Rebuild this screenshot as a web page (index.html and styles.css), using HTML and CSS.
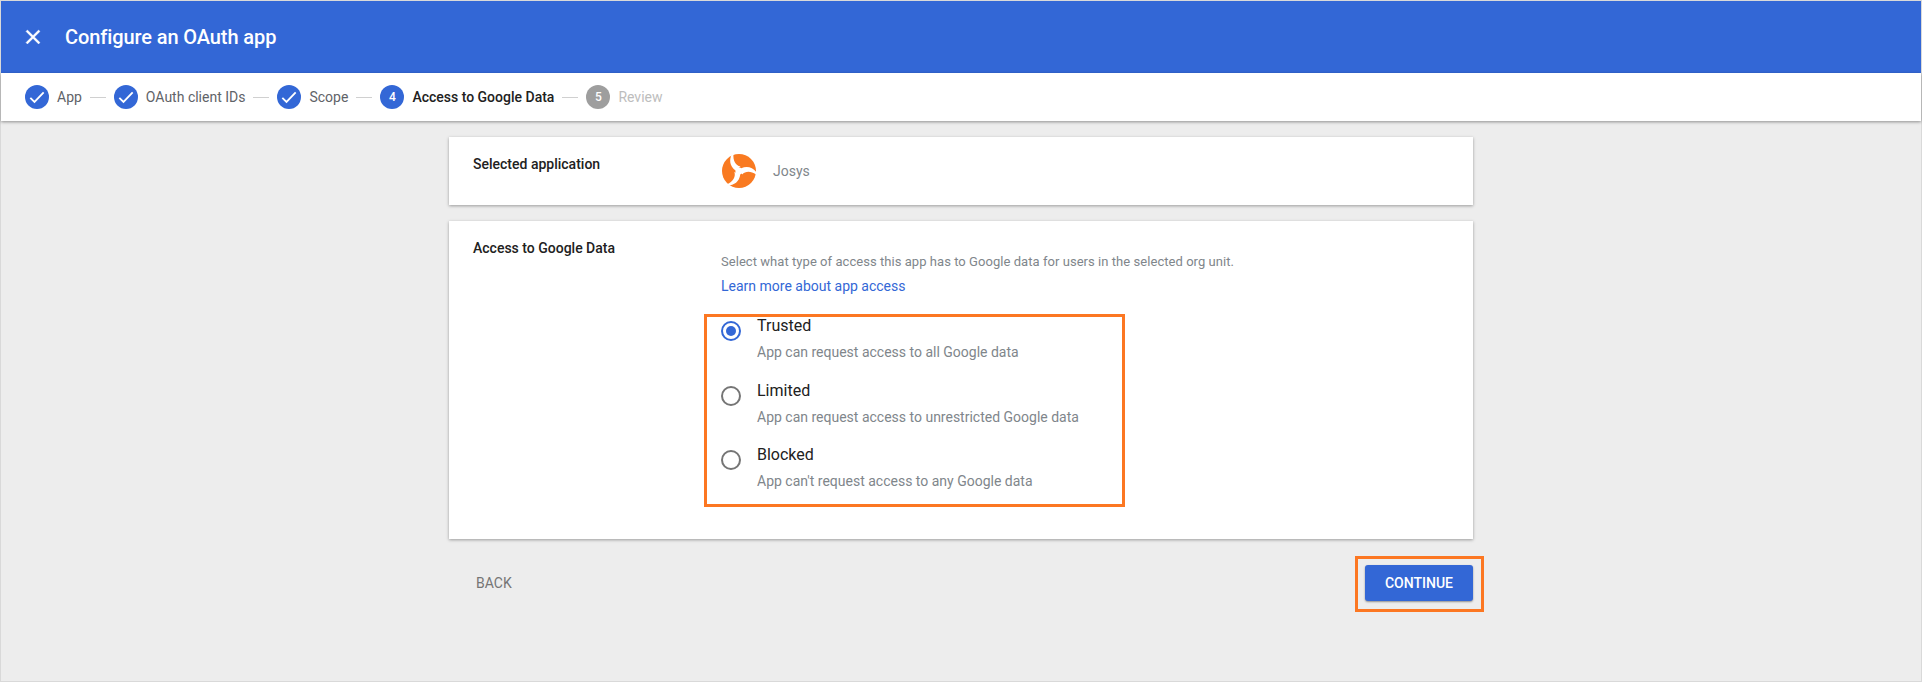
FILE: index.html
```html
<!DOCTYPE html>
<html lang="en">
<head>
<meta charset="utf-8">
<title>Configure an OAuth app</title>
<link rel="stylesheet" href="styles.css">
</head>
<body>
<div class="frame">
  <header class="topbar">
    <svg class="close" width="24" height="24" viewBox="0 0 24 24"><path d="M19 6.41 17.59 5 12 10.59 6.41 5 5 6.41 10.59 12 5 17.59 6.41 19 12 13.41 17.59 19 19 17.59 13.41 12z" fill="#fff" stroke="#fff" stroke-width=".4"/></svg>
    <h1 class="title">Configure an OAuth app</h1>
  </header>
  <nav class="stepper">
    <div class="step done"><span class="dot"><svg width="20" height="20" viewBox="0 0 24 24"><path d="M4 13l5 5L20 6.5" fill="none" stroke="#fff" stroke-width="2.2"/></svg></span><span class="step-label">App</span></div>
    <span class="dash"></span>
    <div class="step done"><span class="dot"><svg width="20" height="20" viewBox="0 0 24 24"><path d="M4 13l5 5L20 6.5" fill="none" stroke="#fff" stroke-width="2.2"/></svg></span><span class="step-label">OAuth client IDs</span></div>
    <span class="dash"></span>
    <div class="step done"><span class="dot"><svg width="20" height="20" viewBox="0 0 24 24"><path d="M4 13l5 5L20 6.5" fill="none" stroke="#fff" stroke-width="2.2"/></svg></span><span class="step-label">Scope</span></div>
    <span class="dash"></span>
    <div class="step current"><span class="dot">4</span><span class="step-label">Access to Google Data</span></div>
    <span class="dash"></span>
    <div class="step pending"><span class="dot">5</span><span class="step-label">Review</span></div>
  </nav>
  <main class="content">
    <section class="card card-app">
      <div class="card-label">Selected application</div>
      <div class="app-row">
        <svg class="logo" width="34" height="34" viewBox="0 0 34 34">
          <circle cx="17" cy="17" r="17" fill="#f97a21"/>
          <path d="M10 0C7 5.5 7.5 12 13.5 16.5L18.5 12.5C13.5 11.5 10.8 6.5 11.5 0Z" fill="#fff"/>
          <path transform="rotate(120 17 17)" d="M10 0C7 5.5 7.5 12 13.5 16.5L18.5 12.5C13.5 11.5 10.8 6.5 11.5 0Z" fill="#fff"/>
          <path transform="rotate(240 17 17)" d="M10 0C7 5.5 7.5 12 13.5 16.5L18.5 12.5C13.5 11.5 10.8 6.5 11.5 0Z" fill="#fff"/>
          <circle cx="17" cy="17" r="3.6" fill="#fff"/>
        </svg>
        <span class="app-name">Josys</span>
      </div>
    </section>
    <section class="card card-access">
      <div class="card-label">Access to Google Data</div>
      <div class="access-body">
        <p class="intro">Select what type of access this app has to Google data for users in the selected org unit.</p>
        <a class="learn" href="#">Learn more about app access</a>
        <div class="options">
          <span class="annotation annotation-options"></span>
          <div class="option">
            <span class="radio checked"></span>
            <div class="option-text"><div class="option-name">Trusted</div><div class="option-desc">App can request access to all Google data</div></div>
          </div>
          <div class="option">
            <span class="radio"></span>
            <div class="option-text"><div class="option-name">Limited</div><div class="option-desc">App can request access to unrestricted Google data</div></div>
          </div>
          <div class="option">
            <span class="radio"></span>
            <div class="option-text"><div class="option-name">Blocked</div><div class="option-desc">App can't request access to any Google data</div></div>
          </div>
        </div>
      </div>
    </section>
    <div class="actions">
      <button class="btn-back" type="button">BACK</button>
      <button class="btn-continue" type="button">CONTINUE<span class="annotation annotation-button"></span></button>
    </div>
  </main>
</div>
</body>
</html>
```
FILE: styles.css
```css
* { box-sizing: border-box; }
html, body { margin: 0; height: 100%; }
body { font-family: Roboto, "Liberation Sans", sans-serif; background: #ededed; overflow: hidden; }
.frame { height: 682px; border: 1px solid #d9d9d9; display: flex; flex-direction: column; background: #ededed; }
.topbar { height: 72px; flex: none; background: #3367d6; display: flex; align-items: center; padding-left: 20px; color: #fff; }
.close { flex: none; }
.title { margin: 0 0 0 20px; font-size: 20px; font-weight: 500; line-height: 24px; letter-spacing: -.1px; }
.stepper { height: 48px; flex: none; background: #fff; display: flex; align-items: center; padding-left: 24px; box-shadow: 0 1px 3px rgba(0,0,0,.4); position: relative; }
.step { display: flex; align-items: center; gap: 8px; font-size: 14px; color: #5f6368; }
.dot { width: 24px; height: 24px; border-radius: 50%; background: #3367d6; color: #fff; display: flex; align-items: center; justify-content: center; font-size: 12px; font-weight: 500; }
.step.current { color: #212121; }
.step.current .step-label { font-weight: 500; }
.step.pending { color: #bdbdbd; }
.step.pending .dot { background: #9e9e9e; }
.dash { width: 16px; height: 1px; background: #d0d0d0; margin: 0 8px; }
.content { width: 1024px; margin: 0 auto; padding-top: 16px; display: flex; flex-direction: column; gap: 16px; }
.card { background: #fff; box-shadow: 0 1px 3px rgba(0,0,0,.35); display: grid; grid-template-columns: 248px 1fr; padding-left: 24px; }
.card-app { height: 68px; padding-top: 18px; }
.card-access { height: 318px; padding-top: 18px; }
.card-label { font-size: 14px; font-weight: 500; line-height: 18px; color: #212121; }
.app-row { display: flex; align-items: center; gap: 17px; margin-top: -1px; height: 34px; margin-left: 1px; }
.app-name { font-size: 14px; color: #80868b; }
.access-body { padding-top: 14px; }
.intro { margin: 0; font-size: 13px; line-height: 18px; letter-spacing: .05px; color: #80868b; }
.learn { display: block; margin-top: 6px; font-size: 14px; line-height: 18px; color: #3367d6; text-decoration: none; }
.options { position: relative; margin-top: 21px; display: flex; flex-direction: column; }
.option { display: flex; height: 64.5px; gap: 16px; }
.radio { width: 20px; height: 20px; border-radius: 50%; border: 2px solid #757575; margin-top: 5px; flex: none; position: relative; }
.radio.checked { border-color: #3367d6; }
.radio.checked::after { content: ""; position: absolute; inset: 3px; border-radius: 50%; background: #3367d6; }
.option-name { font-size: 16px; line-height: 20px; color: #212121; }
.option-desc { font-size: 14px; line-height: 18px; margin-top: 7px; color: #80868b; }
.annotation { position: absolute; border: 3px solid #fc7722; pointer-events: none; }
.annotation-options { left: -17px; top: -2px; width: 421px; height: 193px; }
.actions { display: flex; justify-content: space-between; align-items: center; margin-top: 10px; }
.btn-back { border: 0; background: none; padding: 0 0 0 27px; font: 400 14px Roboto, sans-serif; color: #757575; }
.btn-continue { position: relative; width: 108px; height: 36px; border: 0; border-radius: 3px; background: #3367d6; color: #fff; font: 500 14px Roboto, sans-serif; box-shadow: 0 1px 2px rgba(0,0,0,.4); }
.annotation-button { left: -10px; top: -9px; width: 129px; height: 56px; }
```
